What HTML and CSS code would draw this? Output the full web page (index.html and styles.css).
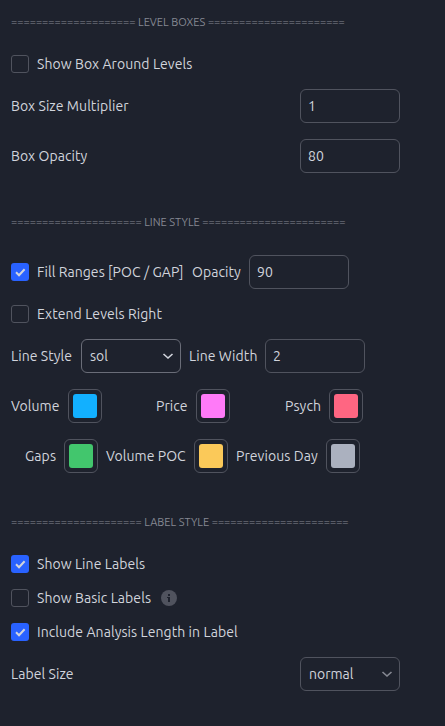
FILE: index.html
```html
<!DOCTYPE html>
<html lang="en">
  <head>
    <meta charset="UTF-8" />
    <meta name="viewport" content="width=device-width, initial-scale=1.0" />
    <title>Settings</title>
    <link rel="stylesheet" href="styles.css">
  </head>
  <body>
    <form class="settings">
      <h2 class="heading">==================== LEVEL BOXES ======================</h2>
      <div class="row check">
        <span class="checkbox"></span>
        <span class="label">Show Box Around Levels</span>
      </div>
      <div class="row split">
        <span class="label">Box Size Multiplier</span>
        <input class="field" type="text" value="1">
      </div>
      <div class="row split">
        <span class="label">Box Opacity</span>
        <input class="field" type="text" value="80">
      </div>

      <h2 class="heading">===================== LINE STYLE =======================</h2>
      <div class="row">
        <span class="checkbox checked"><svg viewBox="0 0 18 18"><path d="M5 9.3 L8 12.2 L13.6 6.2" /></svg></span>
        <span class="label fill">Fill Ranges [POC / GAP]</span>
        <span class="label opacity">Opacity</span>
        <input class="field" type="text" value="90">
      </div>
      <div class="row check">
        <span class="checkbox"></span>
        <span class="label">Extend Levels Right</span>
      </div>
      <div class="row">
        <span class="label line-style">Line Style</span>
        <div class="field select active">sol<svg viewBox="0 0 12 8"><path d="M1.5 2 L6 6 L10.5 2" /></svg></div>
        <span class="label line-width">Line Width</span>
        <input class="field" type="text" value="2">
      </div>
      <div class="row">
        <span class="label volume">Volume</span>
        <span class="swatch"><span class="color blue"></span></span>
        <span class="label price">Price</span>
        <span class="swatch"><span class="color pink"></span></span>
        <span class="label psych">Psych</span>
        <span class="swatch"><span class="color red"></span></span>
      </div>
      <div class="row">
        <span class="label gaps">Gaps</span>
        <span class="swatch"><span class="color green"></span></span>
        <span class="label poc">Volume POC</span>
        <span class="swatch"><span class="color yellow"></span></span>
        <span class="label previous">Previous Day</span>
        <span class="swatch"><span class="color gray"></span></span>
      </div>

      <h2 class="heading">===================== LABEL STYLE ======================</h2>
      <div class="row check">
        <span class="checkbox checked"><svg viewBox="0 0 18 18"><path d="M5 9.3 L8 12.2 L13.6 6.2" /></svg></span>
        <span class="label">Show Line Labels</span>
      </div>
      <div class="row check">
        <span class="checkbox"></span>
        <span class="label basic">Show Basic Labels</span>
        <svg class="info" viewBox="0 0 16 16"><circle cx="8" cy="8" r="8" /><path d="M7 4h2v2H7zM6 7h3v5H7V8H6z" /></svg>
      </div>
      <div class="row check">
        <span class="checkbox checked"><svg viewBox="0 0 18 18"><path d="M5 9.3 L8 12.2 L13.6 6.2" /></svg></span>
        <span class="label">Include Analysis Length in Label</span>
      </div>
      <div class="row split">
        <span class="label">Label Size</span>
        <div class="field select">normal<svg viewBox="0 0 12 8"><path d="M1.5 2 L6 6 L10.5 2" /></svg></div>
      </div>
    </form>
  </body>
</html>
```
FILE: styles.css
```css
* {
  box-sizing: border-box;
}

body {
  margin: 0;
  background-color: #1e222d;
  color: #d1d4dc;
  font-family: Ubuntu, "Noto Sans", sans-serif;
  font-size: 14px;
}

.settings {
  display: flex;
  flex-direction: column;
  gap: 16px;
  height: 726px;
  padding: 5px 11px;
}

.heading {
  height: 34px;
  margin: 16px 0 0;
  color: #868993;
  font-size: 11px;
  font-weight: normal;
  letter-spacing: 0.02px;
  line-height: 34px;
  white-space: nowrap;
}

.heading:first-child {
  margin-top: 0;
}

.row {
  display: flex;
  align-items: center;
  gap: 8px;
  height: 34px;
}

.row.check {
  height: 18px;
}

.row.split {
  justify-content: space-between;
  width: 389px;
}

.label {
  flex: none;
  letter-spacing: 0.07px;
  line-height: 18px;
  white-space: nowrap;
}

.label.fill {
  width: 147px;
}

.label.opacity {
  width: 49px;
}

.label.line-style {
  width: 62px;
}

.label.line-width {
  width: 68px;
}

.label.volume {
  width: 49px;
}

.label.price {
  width: 32px;
  margin-left: 46px;
}

.label.psych {
  width: 36px;
  margin-left: 47px;
}

.label.gaps {
  width: 31px;
  margin-left: 14px;
}

.label.poc {
  width: 80px;
}

.label.previous {
  width: 82px;
}

.label.basic {
  width: 116px;
}

.checkbox {
  flex: none;
  width: 18px;
  height: 18px;
  border: 1px solid #50535e;
  border-radius: 3px;
}

.checkbox.checked {
  border: none;
  background-color: #2962ff;
}

.checkbox svg {
  display: block;
  fill: none;
  stroke: #d1d4dc;
  stroke-width: 2;
}

.field {
  flex: none;
  width: 100px;
  height: 34px;
  padding: 0 7px;
  border: 1px solid #50535e;
  border-radius: 6px;
  background-color: transparent;
  color: inherit;
  font: inherit;
  outline: none;
}

.select {
  display: flex;
  align-items: center;
  justify-content: space-between;
  padding: 0 6px 0 8px;
}

.select svg {
  width: 12px;
  height: 8px;
  fill: none;
  stroke: #868993;
  stroke-width: 1.6;
}

.select.active {
  border-color: #6a6d78;
}

.select.active svg {
  stroke: #d1d4dc;
}

.swatch {
  flex: none;
  width: 34px;
  height: 34px;
  padding: 4px;
  border: 1px solid #50535e;
  border-radius: 6px;
}

.color {
  display: block;
  width: 24px;
  height: 24px;
  border-radius: 3px;
}

.blue {
  background-color: #12b0ff;
}

.pink {
  background-color: #ff7af8;
}

.red {
  background-color: #ff6682;
}

.green {
  background-color: #42c66d;
}

.yellow {
  background-color: #fbc959;
}

.gray {
  background-color: #abb1bf;
}

.info {
  width: 16px;
  height: 16px;
}

.info circle {
  fill: #50535e;
}

.info path {
  fill: #1e222d;
}
```
